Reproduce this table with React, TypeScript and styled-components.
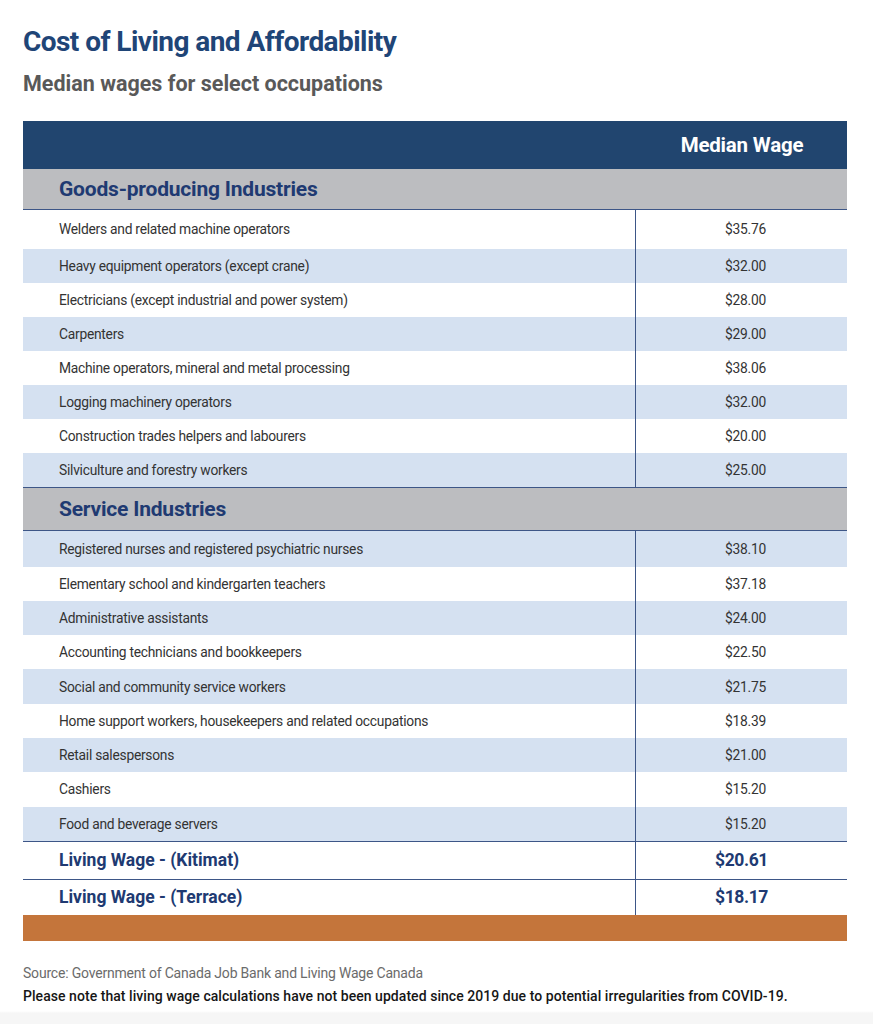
import React from 'react';
import styled, { createGlobalStyle } from 'styled-components';

const GlobalStyle = createGlobalStyle`
  body {
    margin: 0;
    background: #ffffff;
    font-family: Roboto, 'Liberation Sans', sans-serif;
  }
`;

const Page = styled.div`
  width: 873px;
  min-height: 1024px;
  padding: 26px 26px 0 23px;
  box-sizing: border-box;
  background: linear-gradient(to bottom, #ffffff 0, #ffffff 1011px, #f6f6f6 1013px);
`;

const Title = styled.h1`
  margin: 0;
  font-size: 28px;
  line-height: 32px;
  font-weight: 700;
  letter-spacing: -0.55px;
  color: #1f4577;
`;

const Subtitle = styled.h2`
  margin: 14px 0 0;
  font-size: 21.5px;
  line-height: 24px;
  font-weight: 700;
  letter-spacing: 0;
  color: #595959;
`;

const Table = styled.div`
  margin-top: 25px;
  width: 824px;
  display: grid;
  grid-template-columns: 612px 212px;
`;

const HeadRow = styled.div`
  grid-column: 1 / 3;
  display: grid;
  grid-template-columns: 612px 212px;
  height: 48px;
  align-items: center;
  background: #21456f;
  color: #ffffff;
`;

const HeadCell = styled.div`
  grid-column: 2;
  text-align: center;
  padding-left: 2px;
  font-size: 20.5px;
  font-weight: 700;
  letter-spacing: -0.2px;
`;

const Section = styled.div<{ $top?: boolean }>`
  grid-column: 1 / 3;
  height: ${(p) => (p.$top ? '39.5px' : '41.5px')};
  display: flex;
  align-items: center;
  padding-left: 36px;
  background: #bcbdc0;
  border-top: ${(p) => (p.$top ? 'none' : '1.5px solid #3d5687')};
  border-bottom: 1.5px solid #3d5687;
  color: #203a72;
  font-size: 21px;
  font-weight: 700;
  letter-spacing: -0.2px;
`;

const Cell = styled.div<{ $shade: boolean; $h: number }>`
  height: ${(p) => p.$h}px;
  display: flex;
  align-items: center;
  background: ${(p) => (p.$shade ? '#d5e1f1' : '#ffffff')};
  color: #333333;
  font-size: 13.8px;
  letter-spacing: -0.25px;
`;

const NameCell = styled(Cell)`
  padding-left: 36px;
`;

const ValueCell = styled(Cell)`
  justify-content: center;
  padding-left: 8px;
  border-left: 1.5px solid #3d5687;
`;

const TotalName = styled.div<{ $h: number }>`
  height: ${(p) => p.$h}px;
  display: flex;
  align-items: center;
  padding-left: 36px;
  border-top: 1.5px solid #3d5687;
  color: #203a72;
  font-size: 17.5px;
  font-weight: 700;
  letter-spacing: 0;
`;

const TotalValue = styled(TotalName)`
  padding-left: 0;
  justify-content: center;
  border-left: 1.5px solid #3d5687;
  letter-spacing: -0.4px;
`;

const BottomBar = styled.div`
  grid-column: 1 / 3;
  height: 26px;
  background: #c4753b;
`;

const Footer = styled.div`
  margin-top: 21px;
  font-size: 14px;
  line-height: 23px;
`;

const Source = styled.div`
  color: #6b6b6b;
  letter-spacing: -0.2px;
`;

const Note = styled.div`
  color: #161616;
  font-weight: 500;
  letter-spacing: 0.05px;
`;

const goods: [string, string][] = [
  ['Welders and related machine operators', '$35.76'],
  ['Heavy equipment operators (except crane)', '$32.00'],
  ['Electricians (except industrial and power system)', '$28.00'],
  ['Carpenters', '$29.00'],
  ['Machine operators, mineral and metal processing', '$38.06'],
  ['Logging machinery operators', '$32.00'],
  ['Construction trades helpers and labourers', '$20.00'],
  ['Silviculture and forestry workers', '$25.00'],
];

const services: [string, string][] = [
  ['Registered nurses and registered psychiatric nurses', '$38.10'],
  ['Elementary school and kindergarten teachers', '$37.18'],
  ['Administrative assistants', '$24.00'],
  ['Accounting technicians and bookkeepers', '$22.50'],
  ['Social and community service workers', '$21.75'],
  ['Home support workers, housekeepers and related occupations', '$18.39'],
  ['Retail salespersons', '$21.00'],
  ['Cashiers', '$15.20'],
  ['Food and beverage servers', '$15.20'],
];

// first row of each block is a bit taller than the rest
const renderRows = (rows: [string, string][], firstH: number, h: number, shadeFirst: boolean) =>
  rows.map(([name, value], i) => {
    const shade = (i % 2 === 0) === shadeFirst;
    const rowH = i === 0 ? firstH : h;
    return (
      <React.Fragment key={name}>
        <NameCell $shade={shade} $h={rowH}>{name}</NameCell>
        <ValueCell $shade={shade} $h={rowH}>{value}</ValueCell>
      </React.Fragment>
    );
  });

const App: React.FC = () => {
  return (
    <Page>
      <GlobalStyle />
      <Title>Cost of Living and Affordability</Title>
      <Subtitle>Median wages for select occupations</Subtitle>
      <Table>
        <HeadRow>
          <HeadCell>Median Wage</HeadCell>
        </HeadRow>
        <Section $top>Goods-producing Industries</Section>
        {renderRows(goods, 39.5, 34, false)}
        <Section>Service Industries</Section>
        {renderRows(services, 36, 34.3, true)}
        <TotalName $h={37}>Living Wage - (Kitimat)</TotalName>
        <TotalValue $h={37}>$20.61</TotalValue>
        <TotalName $h={35}>Living Wage - (Terrace)</TotalName>
        <TotalValue $h={35}>$18.17</TotalValue>
        <BottomBar />
      </Table>
      <Footer>
        <Source>Source: Government of Canada Job Bank and Living Wage Canada</Source>
        <Note>Please note that living wage calculations have not been updated since 2019 due to potential irregularities from COVID-19.</Note>
      </Footer>
    </Page>
  );
};

export default App;
